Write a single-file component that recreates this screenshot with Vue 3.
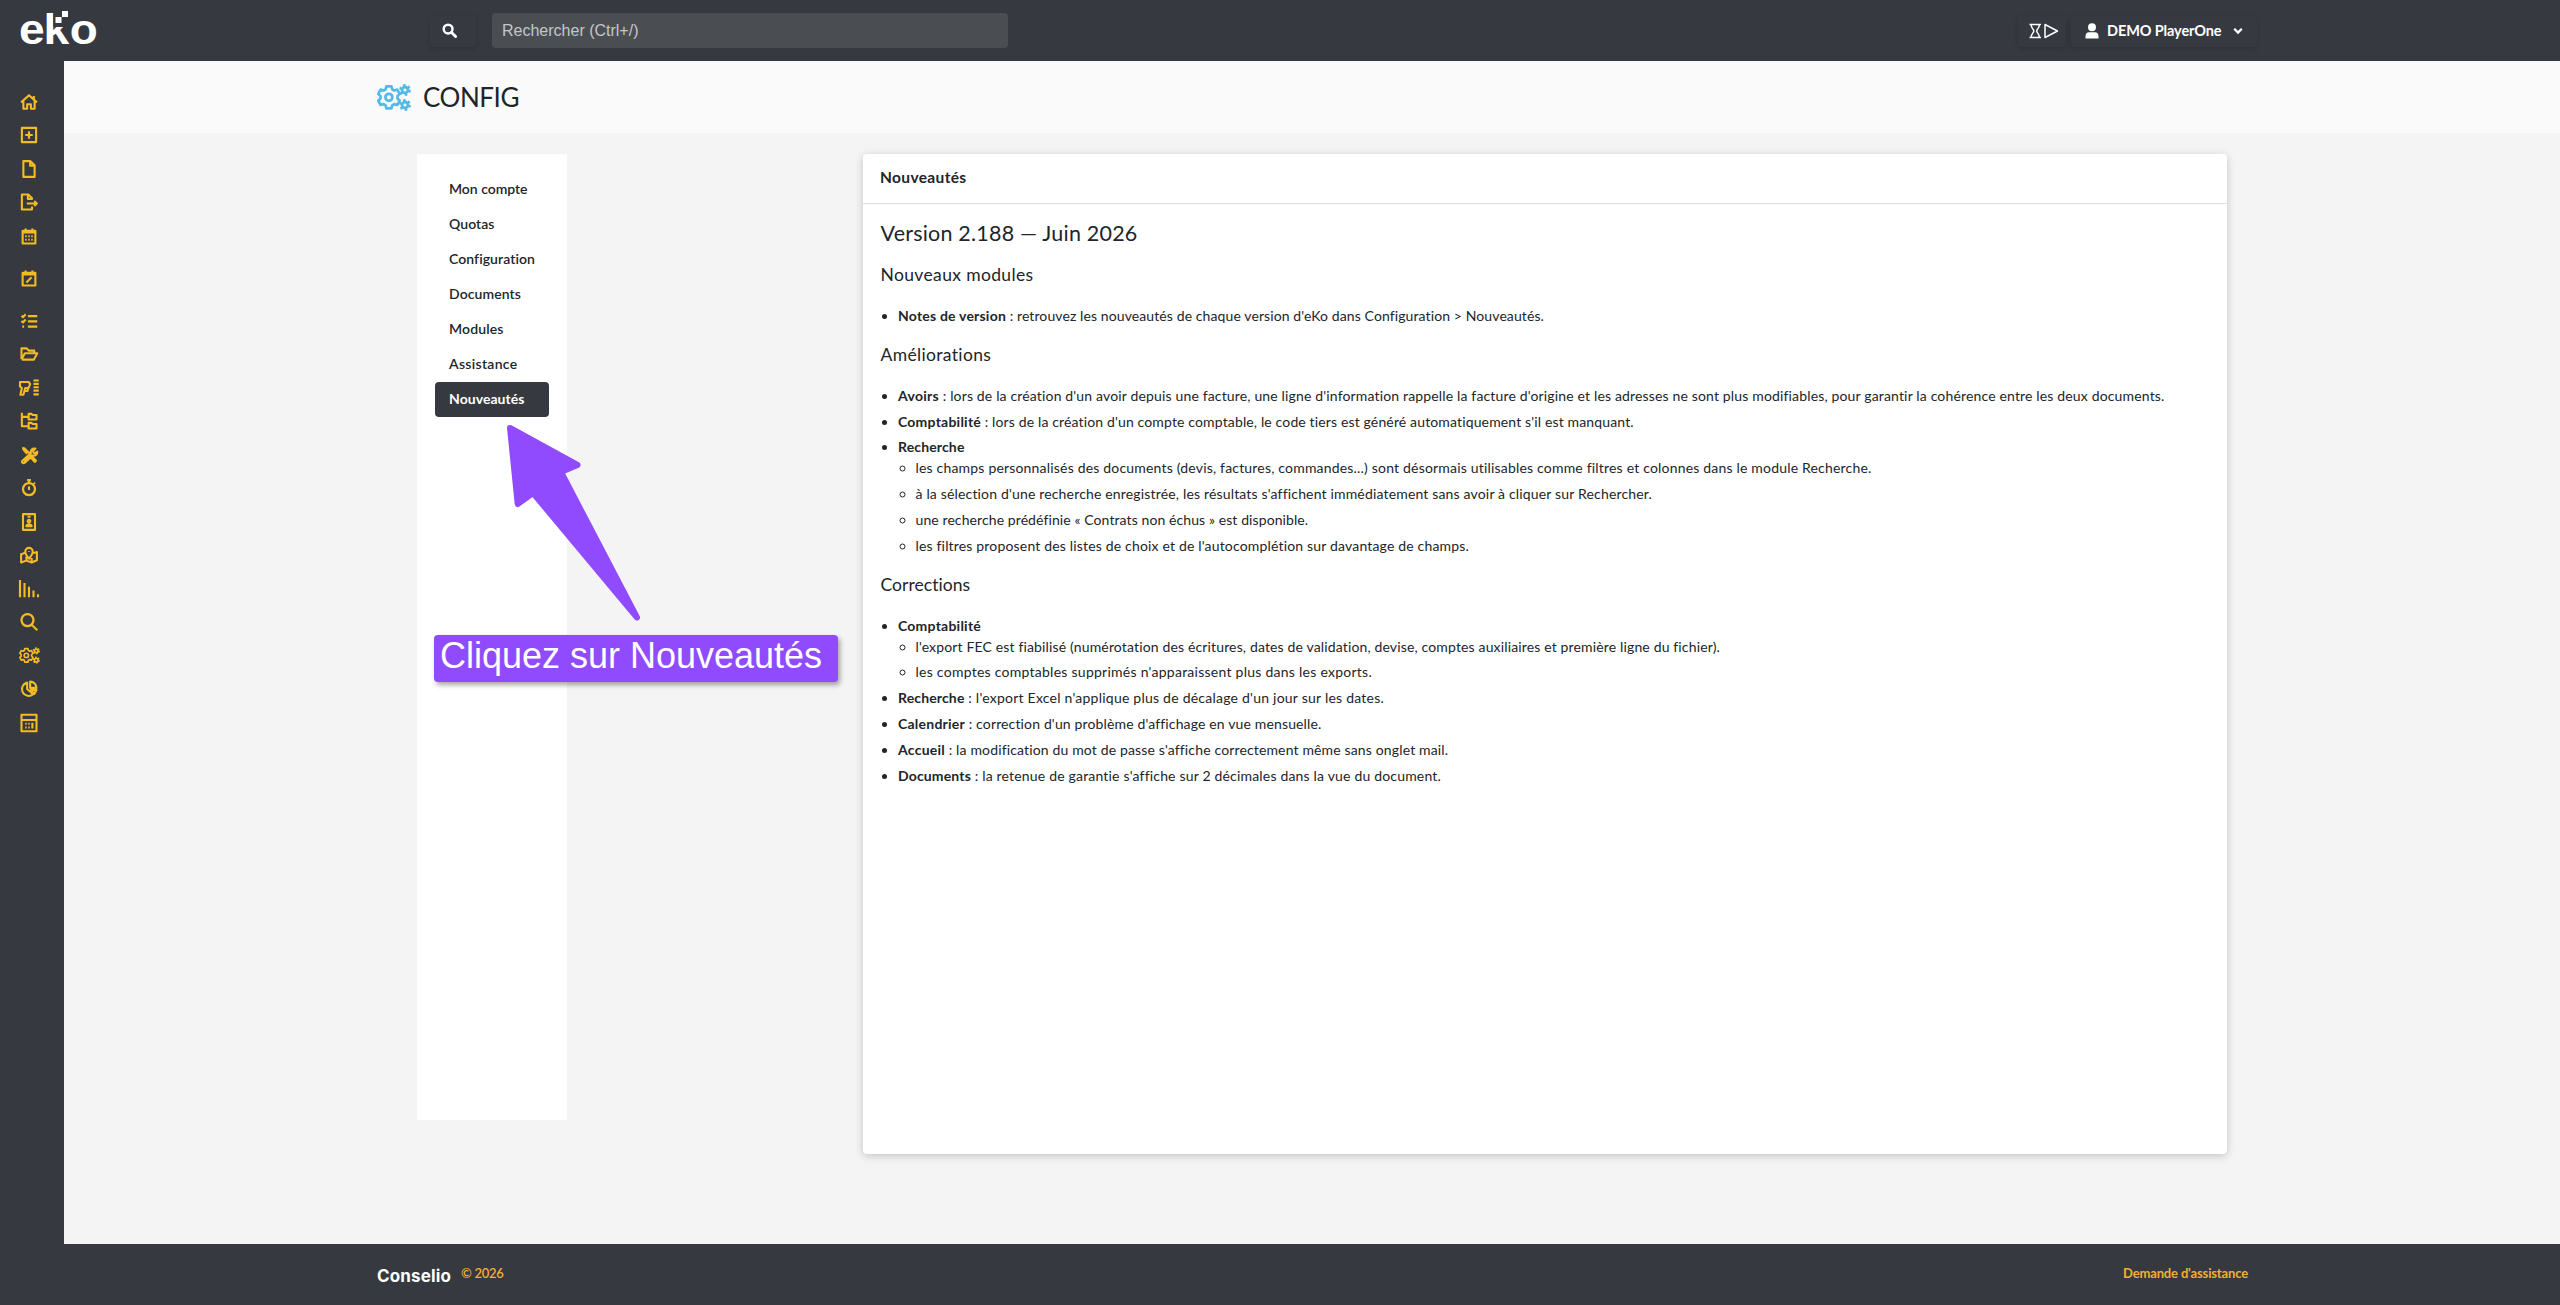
<script setup>
import { ref } from 'vue';

const search = ref('');
const activeTab = ref('Nouveautés');

// Icones de la barre latérale (viewBox 24x24)
const modules = [
  { name: 'accueil', paths: ['M1.500 12.500 12 3l10.500 9.500M18.500 4v5M4.500 11v10h5v-6h5v6h5V11'] },
  { name: 'nouveau', paths: ['M2.500 2.500h19v19h-19zM12 7v10M7 12h10'] },
  { name: 'document', paths: ['M4.500 1.500h9.500l5.500 5.500v15.500h-15zM13.500 1.500v6h6'] },
  { name: 'export', paths: ['M16 9V7l-5-5H2.500v20H16v-4M10.500 2v6H16M9 14h13M19 10.800 22.500 14 19 17.200'] },
  { name: 'agenda', paths: ['M3.500 5h17v17h-17zM7.500 2v3M16.500 2v3M4 7.300h16M7 12.300h2M11 12.300h2M15 12.300h2M7 17h2M11 17h2M15 17h2'] },
  { name: 'planning', tall: true, paths: ['M3.500 5h17v17h-17zM7.500 2v3M16.500 2v3M4 7.300h16M8.500 18l7-7'] },
  { name: 'taches', paths: ['M2 5l2 2 3.500-4M2 12l2 2 3.500-4M10.500 5.500H23M10.500 12.500H23M10.500 19.500H23M3 19.500h2.500'] },
  { name: 'dossiers', paths: ['M2 19V4.500h7l2.500 3h7.500V11M2 19l4.500-8H23l-4.500 8.500H2.500'] },
  { name: 'inventaire', paths: ['M0 4h11.500l2 2.500-2 5.500H7l-2.500 9H.5L2.500 12 0 10zM7 16h3l1-4M18 2h7M18 6.500h7M18 11h7M18 15.500h7M18 20.500h7'] },
  { name: 'arborescence', paths: ['M2.500 1v18h8M2.500 6.500h8M11.500 2.500h4l1 1.500H22v6H11.500zM11.500 14.500h4l1 1.500H22v6H11.500z'] },
  { name: 'outils', paths: ['M3 2.500l3.500 1 6 6M4 4l5.500 6.500M13.500 14.500l6 6.500M15 13l6.500 6.500-2.500 2.500M3 20 14.500 9.500c-1-4 2-7 6-6l-3 3 .5 2.500 2.500.5 2.500-2c.5 4-3 6-6 5L6 22.500c-2 1-4.500-1-3-2.500M5 20.500 15.500 11'] },
  { name: 'chrono', paths: ['M12 5.500a8 8 0 1 0 .01 0M9.500 1.500h5M12 2v3.500M12 9.500v5M18.500 5l1.500 1.500'] },
  { name: 'contacts', paths: ['M4 1.500h16v21H4zM10 5h4M12 9a1.800 1.800 0 1 0 .01 0M8.500 17.500c0-3 7-3 7 0z'] },
  { name: 'carte', paths: ['M7 9 1.500 11v11l7-2.500 7 2.500 7-3V8L18 9.500M8.500 14v5.500M15.500 16v6M12 17c-3-4-5-6.500-5-9.500a5 5 0 0 1 10 0c0 3-2 5.500-5 9.500zM12 7v1'] },
  { name: 'statistiques', paths: ['M0 0v23M6 4v19M12 9v14M18 14v9M24 19v4'] },
  { name: 'recherche', paths: ['M10 1.500a8 8 0 1 0 .01 0M15.500 15.500l7.500 7.500'] },
  { name: 'config', cogs: true },
  { name: 'rapports', paths: ['M9.500 3.500a9 9 0 1 0 8 15.500L9.500 12zM13.500 2v8.500h8.500C22 6 18 2 13.500 2zM14.500 13.500H22l-3 5z'] },
  { name: 'calculatrice', paths: ['M2 1h20v22H2zM2 8h20M7 13h2M11 13h2M7 18h2M11 18h2M16.500 11.700v7.500'] }
];

const tabs = [
  { label: 'Mon compte', width: 78.5 },
  { label: 'Quotas', width: 45.5 },
  { label: 'Configuration', width: 86 },
  { label: 'Documents', width: 72 },
  { label: 'Modules', width: 54.5 },
  { label: 'Assistance', width: 68.5 },
  { label: 'Nouveautés', width: 75.5 }
];

const sections = [
  {
    title: 'Nouveaux modules',
    width: 153,
    items: [
      { label: 'Notes de version', lw: 108, text: " : retrouvez les nouveautés de chaque version d'eKo dans Configuration > Nouveautés.", tw: 538 }
    ]
  },
  {
    title: 'Améliorations',
    width: 111,
    items: [
      { label: 'Avoirs', lw: 41, text: " : lors de la création d'un avoir depuis une facture, une ligne d'information rappelle la facture d'origine et les adresses ne sont plus modifiables, pour garantir la cohérence entre les deux documents.", tw: 1226 },
      { label: 'Comptabilité', lw: 83, text: " : lors de la création d'un compte comptable, le code tiers est généré automatiquement s'il est manquant.", tw: 653.5 },
      {
        label: 'Recherche',
        lw: 66.5,
        children: [
          { text: 'les champs personnalisés des documents (devis, factures, commandes...) sont désormais utilisables comme filtres et colonnes dans le module Recherche.', tw: 956 },
          { text: "à la sélection d'une recherche enregistrée, les résultats s'affichent immédiatement sans avoir à cliquer sur Rechercher.", tw: 736 },
          { text: 'une recherche prédéfinie « Contrats non échus » est disponible.', tw: 392.5 },
          { text: "les filtres proposent des listes de choix et de l'autocomplétion sur davantage de champs.", tw: 553.5 }
        ]
      }
    ]
  },
  {
    title: 'Corrections',
    width: 90,
    items: [
      {
        label: 'Comptabilité',
        lw: 83,
        children: [
          { text: "l'export FEC est fiabilisé (numérotation des écritures, dates de validation, devise, comptes auxiliaires et première ligne du fichier).", tw: 804.5 },
          { text: "les comptes comptables supprimés n'apparaissent plus dans les exports.", tw: 456.5 }
        ]
      },
      { label: 'Recherche', lw: 66.5, text: " : l'export Excel n'applique plus de décalage d'un jour sur les dates.", tw: 419.5 },
      { label: 'Calendrier', lw: 67, text: " : correction d'un problème d'affichage en vue mensuelle.", tw: 356 },
      { label: 'Accueil', lw: 47, text: " : la modification du mot de passe s'affiche correctement même sans onglet mail.", tw: 502.5 },
      { label: 'Documents', lw: 73, text: " : la retenue de garantie s'affiche sur 2 décimales dans la vue du document.", tw: 469.5 }
    ]
  }
];

// Ajuste l'interlettrage pour que le texte occupe la largeur voulue
const vFit = {
  mounted(el, { value }) {
    const natural = el.getBoundingClientRect().width;
    el.style.letterSpacing = (value - natural) / el.textContent.length + 'px';
  }
};
</script>

<template>
  <div class="app">
    <header class="topbar">
      <svg class="logo" width="107" height="61" viewBox="0 0 107 61">
        <text class="logo-text" x="19" y="43.500" textLength="25.700" lengthAdjust="spacingAndGlyphs">e</text>
        <text class="logo-text" x="43.400" y="43.500" textLength="25.700" lengthAdjust="spacingAndGlyphs">k</text>
        <rect class="logo-mask" x="53.300" y="10" width="17" height="17" />
        <text class="logo-text" x="69.700" y="43.500" textLength="28" lengthAdjust="spacingAndGlyphs">o</text>
        <rect x="55.500" y="17" width="6" height="6" fill="#fff" />
        <rect x="62" y="11" width="6" height="6" fill="#fff" />
      </svg>
      <button class="btn btn-search" type="button">
        <svg width="15" height="15" viewBox="0 0 16 16">
          <circle cx="6.500" cy="6.500" r="4.700" fill="none" stroke="#fff" stroke-width="2.600" />
          <path d="M10.200 10.200l4.300 4.300" stroke="#fff" stroke-width="3" stroke-linecap="round" />
        </svg>
      </button>
      <input v-model="search" class="search" type="text" placeholder="Rechercher (Ctrl+/)" />
      <div class="user-zone">
        <button class="btn btn-timer" type="button">
          <svg width="30" height="16" viewBox="0 0 30 16" fill="none" stroke="#fff" stroke-width="1.500">
            <path d="M.5 1.500h11.500M.5 14.500h11.500M2.200 2c0 3.500 2.600 4 2.600 6s-2.600 2.500-2.600 6M10.300 2c0 3.500-2.600 4-2.600 6s2.600 2.500 2.600 6" />
            <path d="M16 1.500v13L28.500 8z" stroke-linejoin="round" />
          </svg>
        </button>
        <button class="btn btn-user" type="button">
          <svg width="14" height="16" viewBox="0 0 14 16" fill="#fff">
            <circle cx="7" cy="4.300" r="4" />
            <path d="M.5 15.500v-2.500C.5 10.500 2 9.200 4 9.200h6c2 0 3.500 1.300 3.500 3.800v2.500z" />
          </svg>
          <span v-fit="114.500">DEMO PlayerOne</span>
          <svg width="10" height="8" viewBox="0 0 10 8">
            <path d="M1.200 1.800 5 5.600l3.800-3.800" fill="none" stroke="#fff" stroke-width="2.300" />
          </svg>
        </button>
      </div>
    </header>

    <svg class="defs" width="0" height="0">
      <symbol id="cogs" viewBox="0 0 34 27">
        <g fill="none" stroke="currentColor">
          <path d="M9 2.300h5l.8 3 2 1.200 3-.9 2.500 4.300-2.200 2.200v2.400l2.200 2.200-2.500 4.300-3-.9-2 1.200-.8 3H9l-.8-3-2-1.200-3 .9L.9 16.700l2.200-2.200v-2.400L.9 9.900l2.300-4.300 3 .9 2-1.200z" transform="translate(.4 0)" stroke-width="2.700" stroke-linejoin="round" />
          <circle cx="11.900" cy="13.300" r="3.500" stroke-width="2.700" />
          <circle cx="28" cy="6" r="3" stroke-width="2.800" />
          <circle cx="28" cy="6" r="4.700" stroke-width="2.400" stroke-dasharray="2.460" />
          <circle cx="28" cy="21" r="3" stroke-width="2.800" />
          <circle cx="28" cy="21" r="4.700" stroke-width="2.400" stroke-dasharray="2.460" />
        </g>
      </symbol>
    </svg>

    <div class="body">
      <nav class="sidebar">
        <a v-for="m in modules" :key="m.name" class="module" :class="{ tall: m.tall }">
          <svg v-if="m.cogs" width="21" height="17"><use href="#cogs" /></svg>
          <svg v-else class="module-icon" width="18" height="18" viewBox="0 0 24 24">
            <path v-for="p in m.paths" :key="p" :d="p" />
          </svg>
        </a>
      </nav>

      <div class="page">
        <div class="page-title">
          <svg width="34" height="27"><use href="#cogs" /></svg>
          <h1><span v-fit="96">CONFIG</span></h1>
        </div>

        <main class="content">
          <div class="tabs">
            <a
              v-for="tab in tabs"
              :key="tab.label"
              class="tab"
              :class="{ active: tab.label === activeTab }"
              @click="activeTab = tab.label"
            >
              <span v-fit="tab.width">{{ tab.label }}</span>
            </a>
          </div>

          <section class="card">
            <div class="card-header"><span v-fit="86.500">Nouveautés</span></div>
            <div class="card-body">
              <h2><span v-fit="257">Version 2.188 — Juin 2026</span></h2>
              <template v-for="section in sections" :key="section.title">
                <h3><span v-fit="section.width">{{ section.title }}</span></h3>
                <ul>
                  <li v-for="item in section.items" :key="item.label">
                    <strong v-fit="item.lw">{{ item.label }}</strong><span v-if="item.text" v-fit="item.tw">{{ item.text }}</span>
                    <ul v-if="item.children">
                      <li v-for="child in item.children" :key="child.text">
                        <span v-fit="child.tw">{{ child.text }}</span>
                      </li>
                    </ul>
                  </li>
                </ul>
              </template>
            </div>
          </section>

          <!-- Aide contextuelle -->
          <svg class="arrow" width="150" height="206" viewBox="0 0 150 206">
            <path d="M10 10 77.500 47 61 54 137 199.500 33 75 17.700 86z" />
          </svg>
          <div class="hint"><span v-fit="382">Cliquez sur Nouveautés</span></div>
        </main>

        <footer class="footer">
          <span class="brand"><span v-fit="74">Conselio</span></span>
          <span class="copy"><span v-fit="42.500">© 2026</span></span>
          <a class="support"><span v-fit="125">Demande d'assistance</span></a>
        </footer>
      </div>
    </div>
  </div>
</template>

<style>
body {
  margin: 0;
  background: #f4f4f4;
}
</style>

<style scoped>
.app {
  height: 1305px;
  display: flex;
  flex-direction: column;
  overflow: hidden;
  font-family: Lato, "Liberation Sans", sans-serif;
  font-size: 14px;
  line-height: 21px;
  color: #212529;
  white-space: nowrap;
}

.topbar {
  flex: none;
  height: 61px;
  display: flex;
  align-items: center;
  background: #363940;
}

.logo {
  flex: none;
}

.logo-text {
  font: bold 42px "Liberation Sans", sans-serif;
  fill: #fff;
}

.logo-mask {
  fill: #363940;
}

.btn {
  display: flex;
  align-items: center;
  height: 32px;
  padding: 0;
  border: none;
  border-radius: 4px;
  background: #363940;
  color: #fff;
  font: bold 14.5px Lato, sans-serif;
  box-shadow: 0 2px 5px rgba(0, 0, 0, 0.16);
}

.btn-search {
  justify-content: center;
  width: 46px;
  margin-left: 323px;
  padding-right: 7px;
}

.search {
  box-sizing: border-box;
  width: 516px;
  height: 35px;
  margin-left: 16px;
  padding: 0 10px;
  border: none;
  border-radius: 4px;
  background: #4a4e53;
  color: #fff;
  font: 16px "Liberation Sans", sans-serif;
}

.search::placeholder {
  color: #c3c6c9;
}

.user-zone {
  display: flex;
  gap: 5px;
  margin-left: 1010px;
}

.btn-timer {
  width: 48px;
  padding-left: 11px;
}

.btn-user {
  width: 186px;
  padding-left: 14px;
}

.btn-user span {
  margin: 0 11px 0 8px;
}

.defs {
  position: absolute;
}

.body {
  flex: 1;
  display: flex;
}

.sidebar {
  flex: none;
  width: 64px;
  box-sizing: border-box;
  padding-top: 24px;
  background: #363940;
  color: #f3bb24;
}

.module {
  display: flex;
  align-items: center;
  justify-content: center;
  width: 58px;
  height: 33.5px;
}

.module.tall {
  height: 51.5px;
}

.module-icon {
  overflow: visible;
  fill: none;
  stroke: currentColor;
  stroke-width: 2.8;
  stroke-linejoin: round;
}

.page {
  flex: 1;
  display: flex;
  flex-direction: column;
}

.page-title {
  height: 72px;
  display: flex;
  align-items: center;
  gap: 12px;
  padding-left: 313px;
  background: #fafafa;
  color: #53b9e6;
}

h1 {
  margin: 0;
  font-size: 26px;
  font-weight: 400;
  color: #212529;
}

.content {
  position: relative;
  flex: 1;
  display: flex;
  align-items: flex-start;
  padding: 21px 0 0 353px;
  background: #f4f4f4;
}

.tabs {
  box-sizing: border-box;
  width: 150px;
  height: 966px;
  padding: 18px;
  background: #fff;
}

.tab {
  display: block;
  height: 35px;
  padding-left: 14px;
  border-radius: 4px;
  line-height: 34px;
  font-weight: 600;
  cursor: pointer;
}

.tab.active {
  background: #363940;
  color: #fff;
  font-weight: 700;
}

.card {
  width: 1364px;
  height: 1000px;
  margin-left: 296px;
  border-radius: 4px;
  background: #fff;
  box-shadow: 0 2px 8px rgba(0, 0, 0, 0.2);
}

.card-header {
  height: 49px;
  padding-left: 17px;
  border-bottom: 1px solid #dcdcdc;
  line-height: 47px;
  font-size: 15.5px;
  font-weight: 700;
}

.card-body {
  padding: 17px 17.5px;
}

h2 {
  margin: 0 0 18px;
  font-size: 21.5px;
  font-weight: 400;
  line-height: 25px;
}

h3 {
  margin: 0 0 20px;
  font-size: 17.5px;
  font-weight: 400;
  line-height: 21px;
}

ul {
  margin: 0 0 17.8px;
  padding-left: 17.5px;
}

li {
  margin-bottom: 4.8px;
}

ul ul,
li:last-child > ul {
  margin: 0;
}

li:has(ul) {
  margin-bottom: 0;
}

.arrow {
  position: absolute;
  left: 436px;
  top: 285px;
}

.arrow path {
  fill: #914bff;
  stroke: #914bff;
  stroke-width: 6;
  stroke-linejoin: round;
}

.hint {
  position: absolute;
  left: 370px;
  top: 502px;
  box-sizing: border-box;
  width: 404px;
  height: 47px;
  padding-left: 6px;
  border-radius: 4px;
  background: #914bff;
  box-shadow: 2px 3px 5px rgba(0, 0, 0, 0.35);
  color: #fff;
  font: 36px/42px "Liberation Sans", sans-serif;
}

.footer {
  flex: none;
  height: 61px;
  display: flex;
  align-items: center;
  background: #363940;
  color: #f0b035;
  font-size: 13px;
  font-weight: 600;
}

.copy,
.support {
  margin-top: -2px;
}

.brand {
  width: 84px;
  margin: 4px 0 0 313px;
  color: #fff;
  font-family: Inter, sans-serif;
  font-size: 17px;
  font-weight: 700;
}

.support {
  margin-left: auto;
  margin-right: 312px;
  font-weight: 700;
}
</style>
